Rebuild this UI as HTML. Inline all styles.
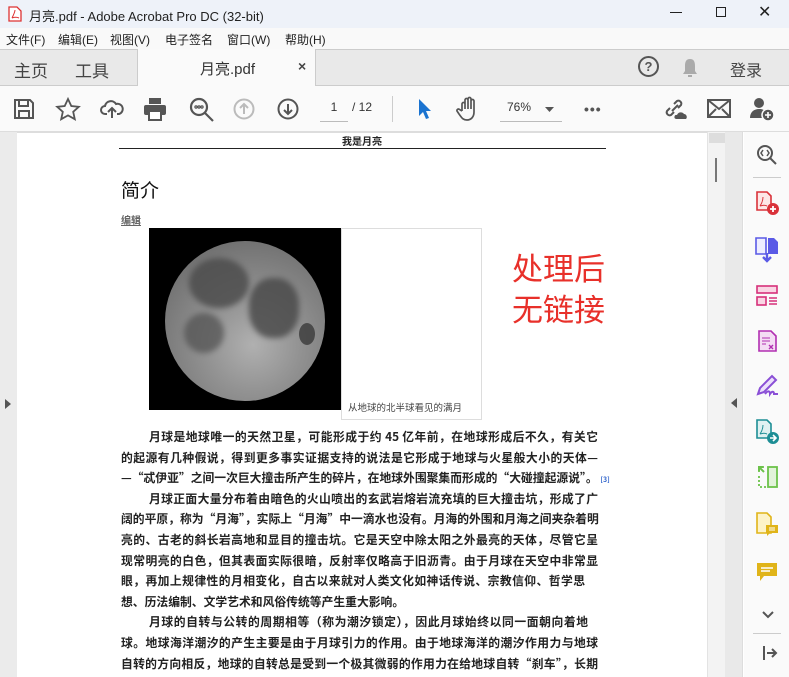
<!DOCTYPE html>
<html><head><meta charset="utf-8"><style>
*{margin:0;padding:0;box-sizing:border-box}
body{width:789px;height:677px;overflow:hidden;position:relative;font-family:"Liberation Sans","Noto Sans CJK SC",sans-serif;background:#fff;color:#222}
.a{position:absolute}
.title{left:0;top:0;width:789px;height:28px;background:#eef2f9;font-size:13px}
.menu{left:0;top:28px;width:789px;height:21px;background:#f9f9f9;font-size:12px;color:#222}
.menu span{position:absolute;top:3px}
.tabs{left:0;top:49px;width:789px;height:37px;background:#e9e9e9;border-top:1px solid #ccc;border-bottom:1px solid #ccc}
.tb{left:0;top:86px;width:789px;height:46px;background:#fafafa;border-bottom:1px solid #ddd}
svg{position:absolute}
.l{position:absolute;left:121px;width:477px;height:20px;font-size:11.8px;line-height:20px;white-space:nowrap;color:#222;font-family:"Noto Sans CJK SC",sans-serif;font-weight:bold;text-align:justify;text-align-last:justify;overflow:visible}
.l.n{text-align:left;text-align-last:left}
</style></head><body>
<div class="a title">
<svg style="left:8px;top:6px" width="14" height="16" viewBox="0 0 14 16"><path d="M1 1h8l4 4v10H1z" fill="#fff" stroke="#d33" stroke-width="1.3"/><path d="M4 12c2-4 3-6 3-8M4 12c3-1 5-1 7 0" stroke="#d33" fill="none" stroke-width="1"/></svg>
<span class="a" style="left:29px;top:6px">月亮.pdf - Adobe Acrobat Pro DC (32-bit)</span>
<span class="a" style="left:670px;top:12px;width:12px;height:1px;background:#222"></span>
<span class="a" style="left:716px;top:7px;width:10px;height:10px;border:1px solid #222"></span>
<span class="a" style="left:758px;top:2px;font-size:16px">✕</span>
</div>
<div class="a menu"><span style="left:6px">文件(F)</span><span style="left:58px">编辑(E)</span><span style="left:110px">视图(V)</span><span style="left:165px">电子签名</span><span style="left:227px">窗口(W)</span><span style="left:285px">帮助(H)</span></div>
<div class="a tabs">
<span class="a" style="left:14px;top:7px;font-size:17px;color:#444">主页</span>
<span class="a" style="left:75px;top:7px;font-size:17px;color:#444">工具</span>
<div class="a" style="left:137px;top:-1px;width:179px;height:38px;background:#fafafa;border-left:1px solid #ccc;border-right:1px solid #ccc"></div>
<span class="a" style="left:200px;top:8px;font-size:15px;color:#333">月亮.pdf</span>
<span class="a" style="left:298px;top:8px;font-size:14px;color:#444;font-weight:bold">×</span>
<span class="a" style="left:638px;top:6px;width:21px;height:21px;border:2px solid #555;border-radius:50%;font-size:13px;font-weight:bold;color:#555;text-align:center;line-height:17px">?</span>
<svg style="left:680px;top:7px" width="20" height="22" viewBox="0 0 20 22"><path d="M10 2c4 0 5 3 5 7v5l2 3H3l2-3V9c0-4 1-7 5-7z" fill="#aaa"/><rect x="8" y="18" width="4" height="2" fill="#aaa"/></svg>
<span class="a" style="left:730px;top:7px;font-size:16px;color:#444">登录</span>
</div>
<div class="a tb">
<svg style="left:13px;top:12px" width="22" height="22" viewBox="0 0 22 22" fill="none" stroke="#555" stroke-width="2"><path d="M2 2h15l3 3v15H2z"/><path d="M6 2v6h9V2M6 20v-7h10v7"/></svg>
<svg style="left:55px;top:11px" width="26" height="24" viewBox="0 0 26 24" fill="none" stroke="#555" stroke-width="1.8"><path d="M13 2l3.3 7 7.5.8-5.6 5 1.6 7.4L13 18.4 6.2 22.2l1.6-7.4-5.6-5 7.5-.8z"/></svg>
<svg style="left:100px;top:12px" width="24" height="22" viewBox="0 0 24 22" fill="none" stroke="#555" stroke-width="2"><path d="M7 16H5a4 4 0 010-8 6 6 0 0111-2 5 5 0 013 10h-2M12 20v-9M8 14l4-4 4 4"/></svg>
<svg style="left:143px;top:11px" width="24" height="24" viewBox="0 0 24 24" fill="#555"><rect x="6" y="1" width="12" height="6"/><rect x="1" y="8" width="22" height="10" rx="2"/><rect x="6" y="14" width="12" height="9" fill="#fff" stroke="#555" stroke-width="2"/></svg>
<svg style="left:189px;top:11px" width="26" height="26" viewBox="0 0 26 26" fill="none" stroke="#555" stroke-width="2.2"><circle cx="10" cy="10" r="8"/><path d="M16 16l8 8"/><circle cx="7" cy="10" r=".6"/><circle cx="10" cy="10" r=".6"/><circle cx="13" cy="10" r=".6"/></svg>
<svg style="left:233px;top:12px" width="22" height="22" viewBox="0 0 22 22" fill="none" stroke="#bbb" stroke-width="2"><circle cx="11" cy="11" r="9.5"/><path d="M11 16V6M7 10l4-4 4 4"/></svg>
<svg style="left:277px;top:12px" width="22" height="22" viewBox="0 0 22 22" fill="none" stroke="#555" stroke-width="2"><circle cx="11" cy="11" r="9.5"/><path d="M11 6v10M7 12l4 4 4-4"/></svg>
<span class="a" style="left:320px;top:14px;width:28px;border-bottom:1px solid #bbb;height:22px;font-size:12px;text-align:center;color:#333">1</span>
<span class="a" style="left:352px;top:14px;font-size:12px;color:#333">/ 12</span>
<span class="a" style="left:392px;top:10px;width:1px;height:26px;background:#ccc"></span>
<svg style="left:418px;top:12px" width="14" height="22" viewBox="0 0 14 22"><path d="M1 1v17l4-4 3 7 3-1-3-7h5z" fill="#1a73d0"/></svg>
<svg style="left:456px;top:10px" width="26" height="26" viewBox="0 0 26 26" fill="none" stroke="#555" stroke-width="1.7"><path d="M6 15V8a1.5 1.5 0 013 0v5V4a1.5 1.5 0 013 0v9V3a1.5 1.5 0 013 0v10V5a1.5 1.5 0 013 0v11c0 5-3 8-7 8s-5-2-8-6l-2-3a1.5 1.5 0 012.5-1.5L6 15"/></svg>
<span class="a" style="left:500px;top:14px;width:62px;height:22px;border-bottom:1px solid #bbb;font-size:12px;color:#333;padding-left:7px">76%</span>
<svg style="left:545px;top:21px" width="9" height="6" viewBox="0 0 9 6"><path d="M0 0h9L4.5 5z" fill="#555"/></svg>
<span class="a" style="left:584px;top:15px;font-size:14px;color:#555;letter-spacing:1px;font-weight:bold">•••</span>
<svg style="left:662px;top:11px" width="26" height="24" viewBox="0 0 26 24" fill="none" stroke="#555" stroke-width="2"><path d="M10 14l6-6M8 11l-3 3a3 3 0 004 4l3-3M12 7l3-3a3 3 0 014 4l-3 3"/><path d="M14 22h10a3 3 0 00-2-5 4 4 0 00-7 1 2 2 0 00-1 4z" fill="#555" stroke="none"/></svg>
<svg style="left:707px;top:13px" width="24" height="19" viewBox="0 0 24 19" fill="none" stroke="#555" stroke-width="2"><rect x="1" y="1" width="22" height="17"/><path d="M1 1l11 9 11-9M1 18l8-8M23 18l-8-8"/></svg>
<svg style="left:750px;top:10px" width="26" height="26" viewBox="0 0 26 26" fill="#555"><circle cx="9" cy="7" r="5"/><path d="M0 22c0-6 4-9 9-9s6 2 7 3v6z"/><circle cx="18" cy="19" r="6" fill="#555" stroke="#fafafa" stroke-width="1.5"/><path d="M18 16v6M15 19h6" stroke="#fff" stroke-width="1.6"/></svg>
</div>
<!-- content -->
<div class="a" style="left:0;top:132px;width:17px;height:545px;background:#ebebeb"></div>
<svg style="left:5px;top:399px" width="6" height="10" viewBox="0 0 6 10"><path d="M0 0l6 5-6 5z" fill="#555"/></svg>
<div class="a" style="left:707px;top:132px;width:18px;height:545px;background:#f3f3f3;border-left:1px solid #e3e3e3"></div>
<div class="a" style="left:709px;top:133px;width:16px;height:10px;background:#ddd"></div>
<div class="a" style="left:715px;top:158px;width:2px;height:24px;background:#777"></div>
<div class="a" style="left:725px;top:132px;width:18px;height:545px;background:#e9e9e9;border-right:1px solid #ddd"></div>
<svg style="left:731px;top:398px" width="6" height="10" viewBox="0 0 6 10"><path d="M6 0L0 5l6 5z" fill="#555"/></svg>
<div class="a" style="left:744px;top:132px;width:45px;height:545px;background:#fafafa"></div>
<!-- right icons -->
<svg style="left:756px;top:144px" width="22" height="22" viewBox="0 0 22 22" fill="none" stroke="#555" stroke-width="2"><circle cx="9" cy="9" r="7"/><path d="M14 14l6 6"/><path d="M7 6l-2 3 2 3M11 6l2 3-2 3" stroke-width="1.5"/></svg>
<div class="a" style="left:753px;top:177px;width:28px;height:1px;background:#ccc"></div>
<svg style="left:755px;top:190px" width="26" height="26" viewBox="0 0 26 26"><path d="M2 2h10l4 4v14H2z" fill="#fde7e7" stroke="#d9323a" stroke-width="1.6"/><path d="M5 16c2-3 3-6 3-9M5 16c3-1 5-1 7 0" fill="none" stroke="#d9323a"/><circle cx="18" cy="19" r="6" fill="#d9323a"/><path d="M18 16v6M15 19h6" stroke="#fff" stroke-width="1.8"/></svg>
<svg style="left:755px;top:236px" width="26" height="28" viewBox="0 0 26 28"><path d="M1 2h10v16H1z" fill="#eef" stroke="#5a5ae6" stroke-width="1.6"/><path d="M13 2h6l4 4v12H13z" fill="#5a5ae6"/><path d="M12 17v7M8 21l4 4 4-4" stroke="#5a5ae6" stroke-width="2.4" fill="none"/></svg>
<svg style="left:755px;top:284px" width="26" height="24" viewBox="0 0 26 24" fill="#f9d6e4" stroke="#d6307a" stroke-width="1.6"><rect x="2" y="2" width="20" height="7"/><rect x="2" y="13" width="9" height="8"/><path d="M14 14h8M14 17h8M14 20h8" fill="none"/></svg>
<svg style="left:757px;top:329px" width="22" height="24" viewBox="0 0 22 24"><path d="M2 2h12l5 5v15H2z" fill="#f4dcf4" stroke="#b12fb1" stroke-width="1.6"/><path d="M5 9h8M5 12h8M5 15h4" stroke="#b12fb1"/><path d="M12 16l4 4M16 16l-4 4" stroke="#b12fb1" stroke-width="1.4"/></svg>
<svg style="left:755px;top:372px" width="26" height="26" viewBox="0 0 26 26" fill="none" stroke="#8a4fd6" stroke-width="2"><path d="M3 22l2-6L17 4l4 4L9 20z" fill="#ece0fb"/><path d="M10 22c3-4 5-3 5 0 2-3 4-3 4 0h4"/></svg>
<svg style="left:755px;top:418px" width="26" height="28" viewBox="0 0 26 28"><path d="M2 2h10l4 4v14H2z" fill="#dff1f1" stroke="#1d8e95" stroke-width="1.6"/><path d="M5 16c2-3 3-6 3-9M5 16c3-1 5-1 7 0" fill="none" stroke="#1d8e95"/><circle cx="18" cy="20" r="6" fill="#1d8e95"/><path d="M15 20h6M18 17l3 3-3 3" stroke="#fff" stroke-width="1.6" fill="none"/></svg>
<svg style="left:756px;top:464px" width="24" height="26" viewBox="0 0 24 26" fill="none" stroke="#6cc24a" stroke-width="1.8"><rect x="12" y="3" width="9" height="20" fill="#e2f3da"/><path d="M3 12v11h7M3 8V5M6 3h2" stroke-dasharray="2 2"/><path d="M3 3l5 5M3 7V3h4" stroke-width="2"/></svg>
<svg style="left:755px;top:511px" width="26" height="26" viewBox="0 0 26 26"><path d="M2 2h10l4 4v16H2z" fill="#fdf3c8" stroke="#e0b419" stroke-width="1.6"/><path d="M11 14h12v8h-8l-3 3v-3h-1z" fill="#e0b419"/><path d="M14 17h6M14 19h6" stroke="#fff"/></svg>
<svg style="left:756px;top:561px" width="22" height="22" viewBox="0 0 22 22"><path d="M1 2h20v13H8l-4 5v-5H1z" fill="#e0b419"/><path d="M5 7h12M5 10h9" stroke="#fff" stroke-width="1.6"/></svg>
<svg style="left:762px;top:611px" width="12" height="8" viewBox="0 0 12 8"><path d="M1 1l5 5 5-5" fill="none" stroke="#555" stroke-width="2"/></svg>
<div class="a" style="left:753px;top:633px;width:28px;height:1px;background:#ccc"></div>
<svg style="left:762px;top:645px" width="16" height="16" viewBox="0 0 16 16" fill="none" stroke="#555" stroke-width="2"><path d="M2 1v14M5 8h9M10 4l4 4-4 4"/></svg>
<!-- page -->
<div class="a" style="left:17px;top:132px;width:690px;height:1px;background:#ddd"></div>
<span class="a" style="left:342px;top:133px;font-size:10px;font-weight:bold;color:#222">我是月亮</span>
<div class="a" style="left:119px;top:148px;width:487px;height:1px;background:#222"></div>
<span class="a" style="left:121px;top:176px;font-size:19px;color:#111">简介</span>
<span class="a" style="left:121px;top:212px;font-size:10px;color:#666;text-decoration:underline;font-weight:bold">编辑</span>
<div class="a" style="left:341px;top:228px;width:141px;height:192px;border:1px solid #ddd"></div>
<div class="a" style="left:149px;top:228px;width:192px;height:182px;background:#000;overflow:hidden">
<div class="a" style="left:16px;top:13px;width:160px;height:160px;border-radius:50%;background:radial-gradient(circle at 55% 65%,#b0b0b0 0,#929292 35%,#777 70%,#5e5e5e 100%)"></div>
<div class="a" style="left:40px;top:30px;width:60px;height:50px;border-radius:50%;background:#4a4a4a;opacity:.8;filter:blur(3px)"></div>
<div class="a" style="left:100px;top:50px;width:50px;height:60px;border-radius:45%;background:#474747;opacity:.8;filter:blur(3px)"></div>
<div class="a" style="left:35px;top:85px;width:40px;height:40px;border-radius:50%;background:#505050;opacity:.7;filter:blur(3px)"></div>
<div class="a" style="left:150px;top:95px;width:16px;height:22px;border-radius:50%;background:#3a3a3a;opacity:.8"></div>
</div>
<span class="a" style="left:348px;top:400px;font-size:9.5px;color:#444">从地球的北半球看见的满月</span>
<div class="a" style="left:512px;top:249px;font-size:31px;line-height:41px;color:#e8302a">处理后<br>无链接</div>
<div class="l" style="top:427px;left:149px;width:449px">月球是地球唯一的天然卫星，可能形成于约 45 亿年前，在地球形成后不久，有关它</div>
<div class="l" style="top:448px">的起源有几种假说，得到更多事实证据支持的说法是它形成于地球与火星般大小的天体—</div>
<div class="l n" style="top:468px">—“忒伊亚”之间一次巨大撞击所产生的碎片，在地球外围聚集而形成的“大碰撞起源说”。 <span style="font-size:7px;color:#36c">[3]</span></div>
<div class="l" style="top:489px;left:149px;width:449px">月球正面大量分布着由暗色的火山喷出的玄武岩熔岩流充填的巨大撞击坑，形成了广</div>
<div class="l" style="top:509px;width:470px">阔的平原，称为“月海”，实际上“月海”中一滴水也没有。月海的外围和月海之间夹杂着明</div>
<div class="l" style="top:530px">亮的、古老的斜长岩高地和显目的撞击坑。它是天空中除太阳之外最亮的天体，尽管它呈</div>
<div class="l" style="top:551px">现常明亮的白色，但其表面实际很暗，反射率仅略高于旧沥青。由于月球在天空中非常显</div>
<div class="l" style="top:571px;width:464px">眼，再加上规律性的月相变化，自古以来就对人类文化如神话传说、宗教信仰、哲学思</div>
<div class="l n" style="top:592px">想、历法编制、文学艺术和风俗传统等产生重大影响。</div>
<div class="l" style="top:612px;left:149px;width:439px">月球的自转与公转的周期相等（称为潮汐锁定），因此月球始终以同一面朝向着地</div>
<div class="l" style="top:633px">球。地球海洋潮汐的产生主要是由于月球引力的作用。由于地球海洋的潮汐作用力与地球</div>
<div class="l" style="top:654px">自转的方向相反，地球的自转总是受到一个极其微弱的作用力在给地球自转“刹车”，长期</div>
</body></html>
